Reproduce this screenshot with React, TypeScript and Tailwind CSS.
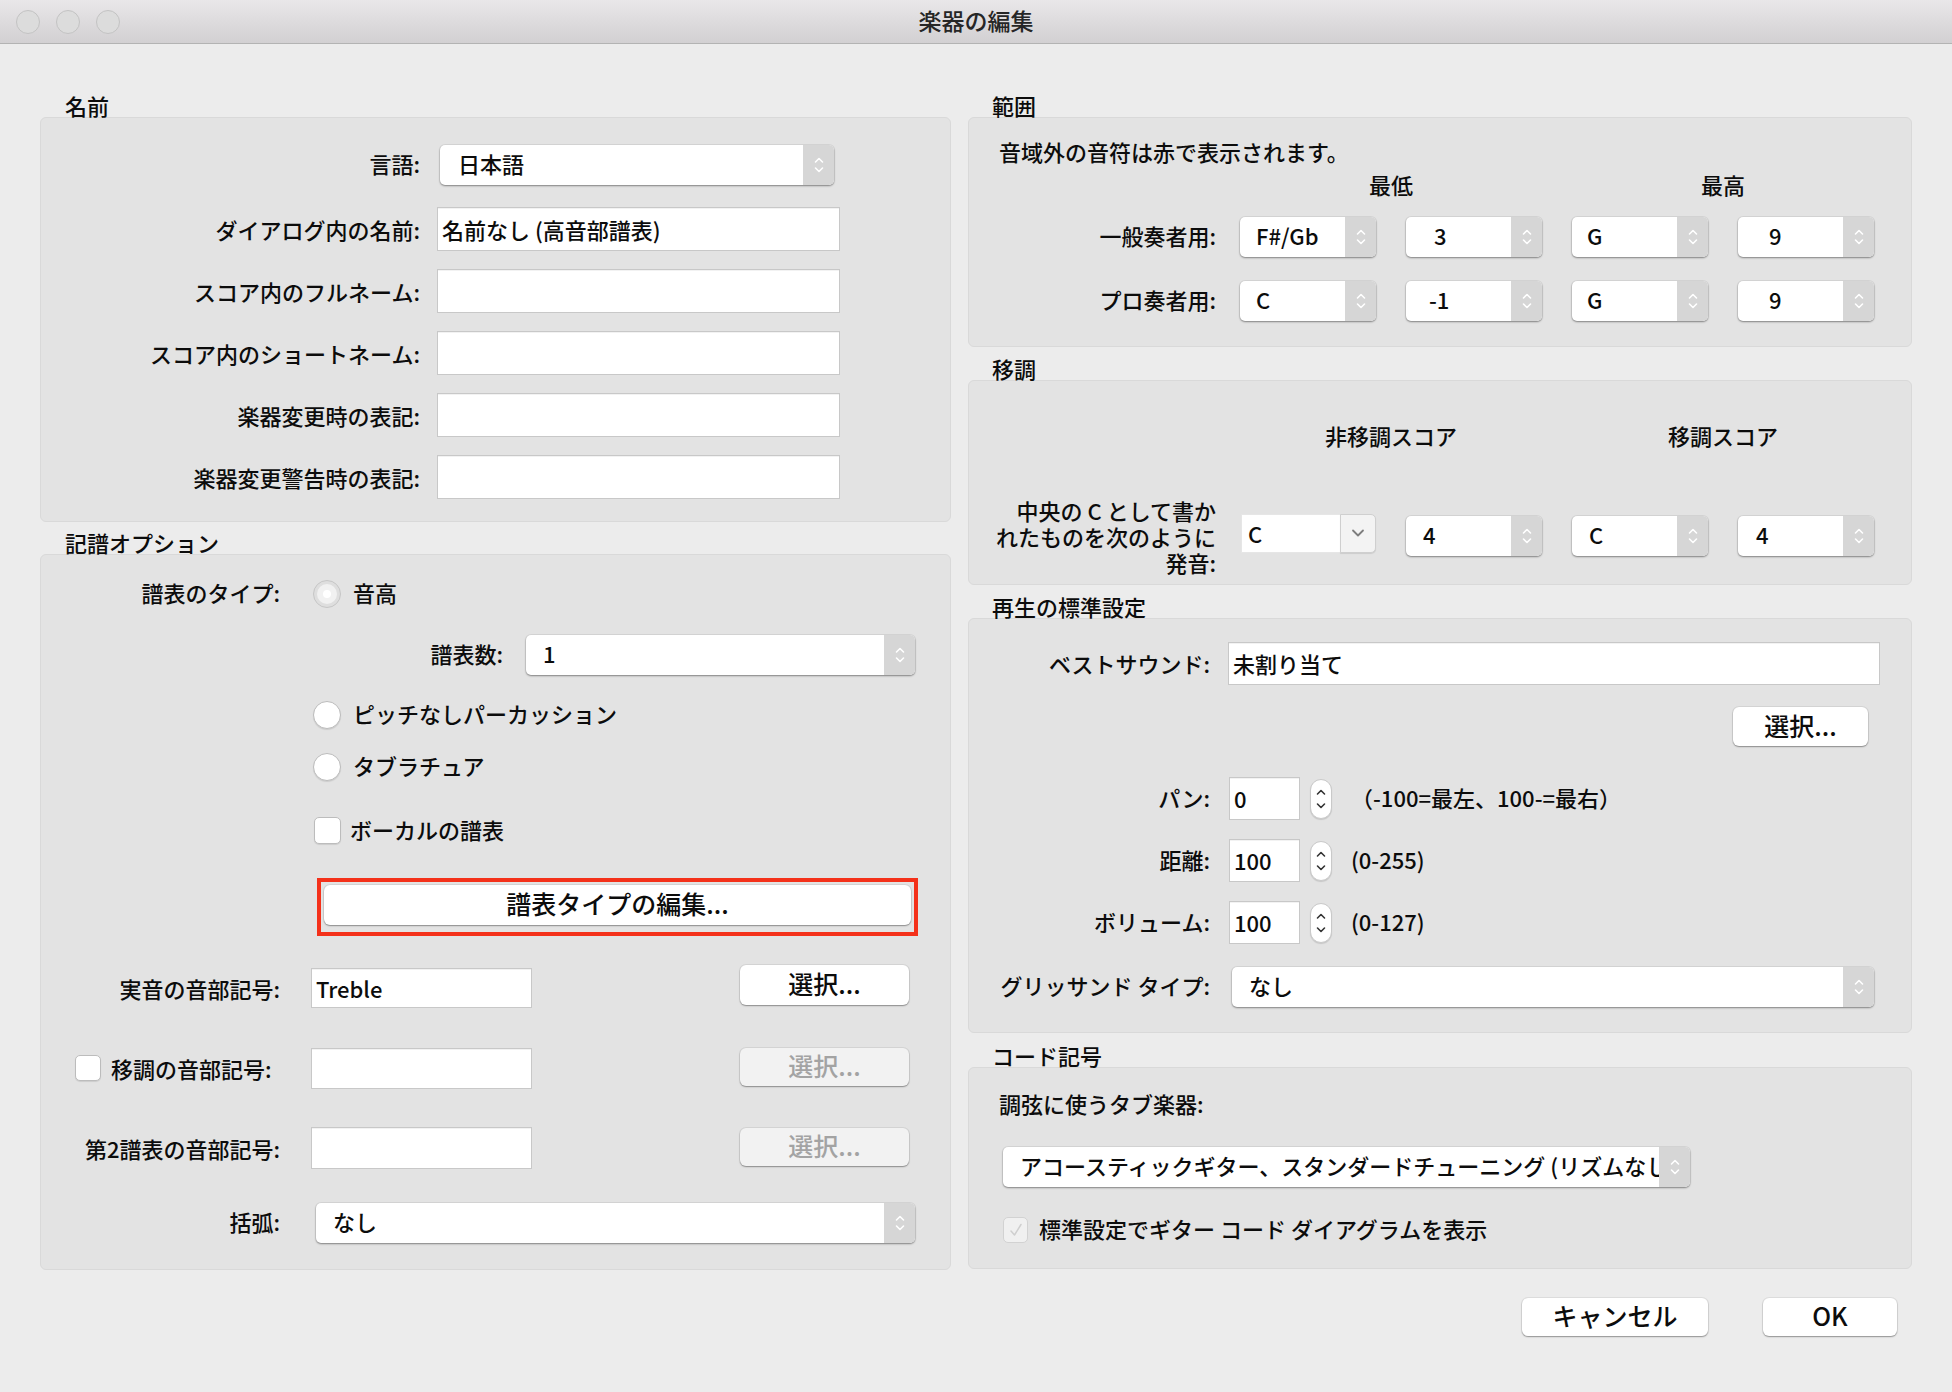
import React from "react";

// small up/down arrows used in the popup steppers
function Arrows({ dark }: { dark?: boolean }) {
  const c = dark ? "#3a3a3a" : "#ffffff";
  return (
    <svg width="10" height="20" viewBox="0 0 10 20" fill="none">
      <path d="M1.5 7 L5 3.5 L8.5 7" stroke={c} strokeWidth="1.6" strokeLinecap="round" strokeLinejoin="round" />
      <path d="M1.5 13 L5 16.5 L8.5 13" stroke={c} strokeWidth="1.6" strokeLinecap="round" strokeLinejoin="round" />
    </svg>
  );
}

function Popup({ text, className, textClass }: { text: string; className: string; textClass: string }) {
  return (
    <div
      className={`flex h-[40px] overflow-hidden rounded-[5px] bg-white shadow-[0_1px_2px_rgba(0,0,0,0.4),0_0_0_1px_rgba(0,0,0,0.05)] ${className}`}
    >
      <div className={`flex flex-1 items-center overflow-hidden whitespace-nowrap pb-[3px] ${textClass}`}>{text}</div>
      <div className="flex w-[31px] shrink-0 items-center justify-center bg-[#d6d6d6]">
        <Arrows />
      </div>
    </div>
  );
}

function Field({ value, className }: { value?: string; className: string }) {
  return (
    <div
      className={`flex items-center border border-[#c8c8c8] bg-white pl-[4px] shadow-[inset_0_1px_0_rgba(0,0,0,0.05)] ${className}`}
    >
      {value}
    </div>
  );
}

function Btn({ children, className, disabled }: { children: React.ReactNode; className: string; disabled?: boolean }) {
  return (
    <div
      className={`flex items-center justify-center rounded-[6px] pb-[2px] text-[25px] shadow-[0_1px_1.5px_rgba(0,0,0,0.35),0_0_0_1px_rgba(0,0,0,0.06)] ${
        disabled ? "bg-[#f2f2f2] text-[#a3a3a3]" : "bg-white text-[#0c0c0c]"
      } ${className}`}
    >
      {children}
    </div>
  );
}

function Radio({ on }: { on?: boolean }) {
  if (on) {
    return (
      <div className="flex h-[28px] w-[28px] shrink-0 items-center justify-center rounded-full border border-[#c6c6c6] bg-[#dedede]">
        <div className="flex h-[20px] w-[20px] items-center justify-center rounded-full bg-[#f1f1f1]">
          <div className="h-[8px] w-[8px] rounded-full bg-white" />
        </div>
      </div>
    );
  }
  return <div className="h-[28px] w-[28px] shrink-0 rounded-full border border-[#bcbcbc] bg-white shadow-[0_1px_1px_rgba(0,0,0,0.1)]" />;
}

function Check() {
  return <div className="h-[27px] w-[27px] shrink-0 rounded-[5px] border border-[#bcbcbc] bg-white shadow-[0_1px_1px_rgba(0,0,0,0.1)]" />;
}

function Spin() {
  return (
    <div className="flex h-[40px] w-[22px] items-center justify-center rounded-[11px] border border-[#c9c9c9] bg-white shadow-[0_1px_1px_rgba(0,0,0,0.12)]">
      <svg width="10" height="26" viewBox="0 0 10 26" fill="none">
        <path d="M1.5 8 L5 4.5 L8.5 8" stroke="#333" strokeWidth="1.6" strokeLinecap="round" strokeLinejoin="round" />
        <path d="M1.5 18 L5 21.5 L8.5 18" stroke="#333" strokeWidth="1.6" strokeLinecap="round" strokeLinejoin="round" />
      </svg>
    </div>
  );
}

export default function App() {
  const panel = "rounded-[6px] border border-[#d9d9d9] bg-[#e3e3e3]";
  return (
    <div className="h-[1392px] w-[1952px] overflow-hidden bg-[#ececec] font-['Noto_Sans_CJK_JP',sans-serif] text-[22px] font-medium text-[#0c0c0c]">
      {/* title bar */}
      <div className="grid h-[44px] grid-cols-[1fr_auto_1fr] items-center border-b border-[#b3b3b3] bg-gradient-to-b from-[#e9e7e9] to-[#d2d0d2]">
        <div className="flex gap-[16px] pl-[16px]">
          <div className="h-[24px] w-[24px] rounded-full border border-[#c3c3c3] bg-[#dcdcdc]" />
          <div className="h-[24px] w-[24px] rounded-full border border-[#c3c3c3] bg-[#dcdcdc]" />
          <div className="h-[24px] w-[24px] rounded-full border border-[#c3c3c3] bg-[#dcdcdc]" />
        </div>
        <div className="pb-[2px] text-[23px] text-[#262626]">楽器の編集</div>
        <div />
      </div>

      <div className="flex gap-[17px] pl-[40px] pt-[52px]">
        {/* left column */}
        <div className="w-[911px]">
          <div className="h-[21px] pl-[25px] leading-[19px]">名前</div>
          <div className={`h-[405px] pt-[27px] ${panel}`}>
            <div className="flex h-[40px] items-center">
              <div className="w-[379px] pb-[3px] text-right">言語:</div>
              <Popup text="日本語" className="ml-[20px] w-[394px]" textClass="pl-[18px]" />
            </div>
            <div className="mt-[22px] flex h-[44px] items-center">
              <div className="w-[379px] text-right">ダイアログ内の名前:</div>
              <Field value="名前なし (高音部譜表)" className="ml-[17px] h-[44px] w-[403px]" />
            </div>
            <div className="mt-[18px] flex h-[44px] items-center">
              <div className="w-[379px] text-right">スコア内のフルネーム:</div>
              <Field className="ml-[17px] h-[44px] w-[403px]" />
            </div>
            <div className="mt-[18px] flex h-[44px] items-center">
              <div className="w-[379px] text-right">スコア内のショートネーム:</div>
              <Field className="ml-[17px] h-[44px] w-[403px]" />
            </div>
            <div className="mt-[18px] flex h-[44px] items-center">
              <div className="w-[379px] text-right">楽器変更時の表記:</div>
              <Field className="ml-[17px] h-[44px] w-[403px]" />
            </div>
            <div className="mt-[18px] flex h-[44px] items-center">
              <div className="w-[379px] text-right">楽器変更警告時の表記:</div>
              <Field className="ml-[17px] h-[44px] w-[403px]" />
            </div>
          </div>

          <div className="mt-[11px] h-[21px] pl-[25px] leading-[19px]">記譜オプション</div>
          <div className={`h-[716px] pt-[19px] ${panel}`}>
            <div className="flex h-[40px] items-center">
              <div className="w-[239px] pb-[3px] text-right">譜表のタイプ:</div>
              <div className="ml-[33px]">
                <Radio on />
              </div>
              <div className="ml-[12px] pb-[3px]">音高</div>
            </div>
            <div className="mt-[21px] flex h-[40px] items-center">
              <div className="w-[462px] pb-[3px] text-right">譜表数:</div>
              <Popup text="1" className="ml-[23px] w-[389px]" textClass="pl-[17px]" />
            </div>
            <div className="mt-[20px] flex h-[40px] items-center pl-[272px]">
              <Radio />
              <div className="ml-[12px] pb-[3px]">ピッチなしパーカッション</div>
            </div>
            <div className="mt-[12px] flex h-[40px] items-center pl-[272px]">
              <Radio />
              <div className="ml-[12px] pb-[3px]">タブラチュア</div>
            </div>
            <div className="mt-[23px] flex h-[40px] items-center pl-[273px]">
              <Check />
              <div className="ml-[9px] pb-[2px]">ボーカルの譜表</div>
            </div>
            <div className="ml-[276px] mt-[28px] h-[58px] w-[601px] border-[4px] border-[#f4311a] px-[3px] pb-[7px] pt-[3px]">
              <Btn className="h-[40px] w-full">譜表タイプの編集...</Btn>
            </div>
            <div className="mt-[32px] flex h-[40px] items-center">
              <div className="w-[239px] text-right">実音の音部記号:</div>
              <Field value="Treble" className="ml-[31px] h-[40px] w-[221px]" />
              <Btn className="mb-[6px] ml-auto mr-[41px] h-[40px] w-[169px]">選択...</Btn>
            </div>
            <div className="mt-[40px] flex h-[40px] items-center">
              <div className="flex w-[239px] items-center pl-[34px]">
                <div className="h-[26px] w-[26px] rounded-[5px] border border-[#bcbcbc] bg-white shadow-[0_1px_1px_rgba(0,0,0,0.1)]" />
                <div className="ml-[10px] whitespace-nowrap">移調の音部記号:</div>
              </div>
              <Field className="ml-[31px] h-[41px] w-[221px]" />
              <Btn disabled className="mb-[2px] ml-auto mr-[41px] h-[38px] w-[169px]">
                選択...
              </Btn>
            </div>
            <div className="mt-[40px] flex h-[40px] items-center">
              <div className="w-[239px] text-right">第2譜表の音部記号:</div>
              <Field className="ml-[31px] h-[42px] w-[221px]" />
              <Btn disabled className="mb-[2px] ml-auto mr-[41px] h-[38px] w-[169px]">
                選択...
              </Btn>
            </div>
            <div className="mt-[35px] flex h-[40px] items-center">
              <div className="w-[239px] pb-[3px] text-right">括弧:</div>
              <Popup text="なし" className="ml-[36px] w-[599px]" textClass="pl-[17px]" />
            </div>
          </div>
        </div>

        {/* right column */}
        <div className="w-[944px]">
          <div className="h-[21px] pl-[24px] leading-[19px]">範囲</div>
          <div className={`h-[230px] pt-[18px] ${panel}`}>
            <div className="flex h-[30px] items-center pl-[30px]">音域外の音符は赤で表示されます。</div>
            <div className="mt-[3px] flex h-[30px] items-center pl-[271px]">
              <div className="w-[302px] text-center">最低</div>
              <div className="ml-[30px] w-[302px] text-center">最高</div>
            </div>
            <div className="mt-[18px] flex h-[40px] items-center">
              <div className="w-[247px] pb-[3px] text-right">一般奏者用:</div>
              <div className="ml-[24px] flex gap-[30px]">
                <Popup text="F#/Gb" className="w-[136px]" textClass="pl-[16px]" />
                <Popup text="3" className="w-[136px]" textClass="pl-[28px]" />
                <Popup text="G" className="w-[136px]" textClass="pl-[15px]" />
                <Popup text="9" className="w-[136px]" textClass="pl-[31px]" />
              </div>
            </div>
            <div className="mt-[24px] flex h-[40px] items-center">
              <div className="w-[247px] pb-[3px] text-right">プロ奏者用:</div>
              <div className="ml-[24px] flex gap-[30px]">
                <Popup text="C" className="w-[136px]" textClass="pl-[16px]" />
                <Popup text="-1" className="w-[136px]" textClass="pl-[23px]" />
                <Popup text="G" className="w-[136px]" textClass="pl-[15px]" />
                <Popup text="9" className="w-[136px]" textClass="pl-[31px]" />
              </div>
            </div>
          </div>

          <div className="mt-[12px] h-[21px] pl-[24px] leading-[19px]">移調</div>
          <div className={`h-[205px] pt-[39px] ${panel}`}>
            <div className="flex h-[30px] items-center pl-[271px]">
              <div className="w-[302px] text-center">非移調スコア</div>
              <div className="ml-[30px] w-[302px] text-center">移調スコア</div>
            </div>
            <div className="mt-[47px] flex items-center">
              <div className="w-[247px] whitespace-nowrap text-right leading-[26px]">
                中央の C として書か
                <br />
                れたものを次のように
                <br />
                発音:
              </div>
              <div className="ml-[25px] flex items-center gap-[30px]">
                <div className="mb-[6px] flex h-[39px] w-[135px]">
                  <div className="flex flex-1 items-end border border-r-0 border-[#e6e6e6] bg-white pb-[2px] pl-[6px]">C</div>
                  <div className="flex w-[36px] items-center justify-center rounded-r-[5px] border border-[#cfcfcf] bg-[#f3f3f3] shadow-[0_1px_1px_rgba(0,0,0,0.1)]">
                    <svg width="14" height="10" viewBox="0 0 14 10" fill="none">
                      <path d="M2 2.5 L7 7.5 L12 2.5" stroke="#7d7d7d" strokeWidth="1.8" strokeLinecap="round" strokeLinejoin="round" />
                    </svg>
                  </div>
                </div>
                <Popup text="4" className="w-[136px]" textClass="pl-[17px]" />
                <Popup text="C" className="w-[136px]" textClass="pl-[17px]" />
                <Popup text="4" className="w-[136px]" textClass="pl-[18px]" />
              </div>
            </div>
          </div>

          <div className="mt-[12px] h-[21px] pl-[24px] leading-[19px]">再生の標準設定</div>
          <div className={`h-[415px] pt-[23px] ${panel}`}>
            <div className="flex h-[43px] items-center">
              <div className="w-[241px] text-right">ベストサウンド:</div>
              <Field value="未割り当て" className="ml-[18px] h-[43px] w-[652px]" />
            </div>
            <div className="mt-[22px] flex justify-end pr-[43px]">
              <Btn className="h-[39px] w-[135px]">選択...</Btn>
            </div>
            <div className="mt-[31px] flex h-[43px] items-center">
              <div className="w-[241px] pb-[2px] text-right">パン:</div>
              <Field value="0" className="ml-[19px] h-[43px] w-[71px]" />
              <div className="ml-[10px]">
                <Spin />
              </div>
              <div className="ml-[19px] whitespace-nowrap pb-[2px]">（-100=最左、100-=最右）</div>
            </div>
            <div className="mt-[19px] flex h-[43px] items-center">
              <div className="w-[241px] pb-[2px] text-right">距離:</div>
              <Field value="100" className="ml-[19px] h-[43px] w-[71px]" />
              <div className="ml-[10px]">
                <Spin />
              </div>
              <div className="ml-[19px] pb-[2px]">(0-255)</div>
            </div>
            <div className="mt-[19px] flex h-[43px] items-center">
              <div className="w-[241px] pb-[2px] text-right">ボリューム:</div>
              <Field value="100" className="ml-[19px] h-[43px] w-[71px]" />
              <div className="ml-[10px]">
                <Spin />
              </div>
              <div className="ml-[19px] pb-[2px]">(0-127)</div>
            </div>
            <div className="mt-[23px] flex h-[40px] items-center">
              <div className="w-[241px] whitespace-nowrap pb-[3px] text-right">グリッサンド タイプ:</div>
              <Popup text="なし" className="ml-[22px] w-[642px]" textClass="pl-[17px]" />
            </div>
          </div>

          <div className="mt-[13px] h-[21px] pl-[24px] leading-[19px]">コード記号</div>
          <div className={`h-[202px] pt-[20px] ${panel}`}>
            <div className="flex h-[30px] items-center pl-[30px]">調弦に使うタブ楽器:</div>
            <Popup
              text="アコースティックギター、スタンダードチューニング (リズムなし)"
              className="ml-[34px] mt-[29px] w-[687px]"
              textClass="pl-[17px]"
            />
            <div className="mt-[28px] flex h-[30px] items-center pl-[34px]">
              <div className="flex h-[26px] w-[25px] items-center justify-center rounded-[5px] border border-[#d2d2d2] bg-[#f0f0f0]">
                <svg width="16" height="16" viewBox="0 0 16 16" fill="none">
                  <path d="M3 9 L6.5 13 L13 2.5" stroke="#cfcfcf" strokeWidth="1.5" strokeLinecap="round" strokeLinejoin="round" />
                </svg>
              </div>
              <div className="ml-[11px] pb-[3px]">標準設定でギター コード ダイアグラムを表示</div>
            </div>
          </div>

          <div className="mt-[29px] flex justify-end gap-[55px] pr-[15px]">
            <Btn className="h-[38px] w-[186px]">キャンセル</Btn>
            <Btn className="h-[38px] w-[134px]">OK</Btn>
          </div>
        </div>
      </div>
    </div>
  );
}
